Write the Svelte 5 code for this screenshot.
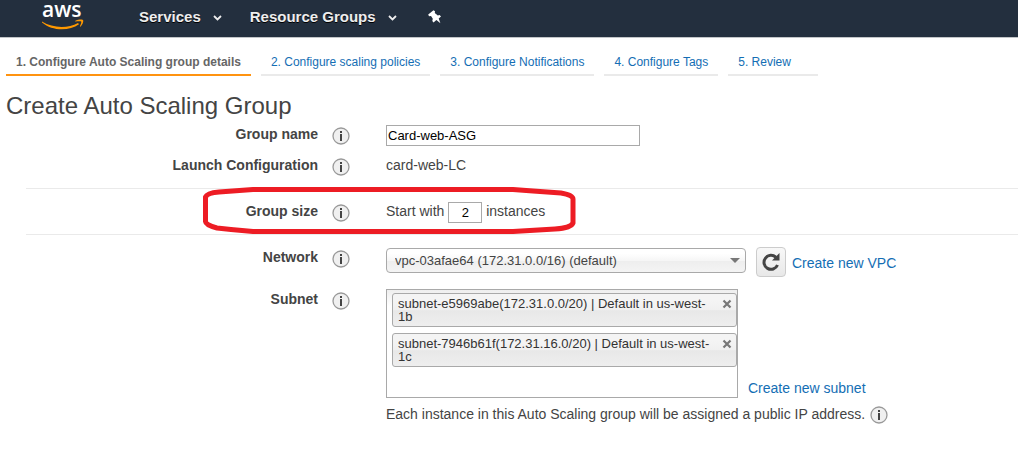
<script>
let groupName = "Card-web-ASG";
let groupSize = "2";
let network = "vpc-03afae64 (172.31.0.0/16) (default)";

let steps = [
	"1. Configure Auto Scaling group details",
	"2. Configure scaling policies",
	"3. Configure Notifications",
	"4. Configure Tags",
	"5. Review"
];

let subnets = [
	"subnet-e5969abe(172.31.0.0/20) | Default in us-west-1b",
	"subnet-7946b61f(172.31.16.0/20) | Default in us-west-1c"
];

const removeSubnet = (subnet) => {
	subnets = subnets.filter((s) => s !== subnet);
};
</script>

{#snippet info(topic)}
	<button class="info" type="button" aria-label="About {topic}">
		<svg width="18" height="18" viewBox="0 0 18 18">
			<circle cx="9" cy="9" r="8" fill="#f0f0f0" stroke="#999" stroke-width="1.3" />
			<path d="M8 4h2v2h-2zM8 7h2v7h-2z" fill="#444" />
		</svg>
	</button>
{/snippet}

{#snippet chevron()}
	<svg width="9" height="6" viewBox="0 0 9 6">
		<path d="M1 1l3.5 3.4L8 1" fill="none" stroke="#eee" stroke-width="1.8" />
	</svg>
{/snippet}

<header class="topnav">
	<a class="logo" href="#home">
		<span>aws</span>
		<svg width="42" height="12" viewBox="0 0 42 12">
			<path d="M0 2.500C11 9.500 26 9.500 36 4l1 1.200C27 12.300 10 12 0 3.400z" fill="#f90" />
			<path d="M33 2c3-1.500 7.300-1.800 8-.9.8 1-.4 4.600-2.400 6.600l-.7-.4c1-2 1.700-4 1.300-4.700-.6-.6-3.200-.4-5.800 0z" fill="#f90" />
		</svg>
	</a>
	<button class="menu" type="button">Services {@render chevron()}</button>
	<button class="menu" type="button">Resource Groups {@render chevron()}</button>
	<button class="pin" type="button" aria-label="Pin shortcuts">
		<svg width="14" height="14" viewBox="0 0 14 14">
			<path d="M5.500.3l1.500 1L6.800 3l3 2.400 1.800-.4 1.400 1.400-2.300 2.200 1.700 4.700-4-3.300L5.500 12.500 4.300 11l.5-2.200L3 6 1 6.300.2 4.600z" fill="#fff" />
		</svg>
	</button>
</header>

<nav class="steps">
	{#each steps as step, i}
		<a href="#step{i + 1}" class:active={i === 0}>{step}</a>
	{/each}
</nav>

<main>
	<h1>Create Auto Scaling Group</h1>

	<form>
		<div class="row">
			<label for="group-name">Group name</label>
			{@render info("group name")}
			<div class="field"><input id="group-name" class="name" type="text" bind:value={groupName} /></div>
		</div>
		<div class="row">
			<span class="label">Launch Configuration</span>
			{@render info("launch configuration")}
			<div class="field">card-web-LC</div>
		</div>

		<div class="row size">
			<label for="group-size">Group size</label>
			{@render info("group size")}
			<div class="field">
				Start with <input id="group-size" class="count" type="text" bind:value={groupSize} /> instances
			</div>
			<svg class="marker" width="374" height="50" viewBox="0 0 374 50">
				<path d="M50 4.500H310L330 6L358 8Q370 10 370 14V38Q368 43 352 44L310 46.500H50L28 44.500L14 43Q2 40 2.500 36V12Q4 8 16 7L50 4.500z" fill="none" stroke="#ed1c24" stroke-width="5" stroke-linejoin="round" />
			</svg>
		</div>

		<div class="row network">
			<label for="network">Network</label>
			{@render info("network")}
			<div class="field inline">
				<div class="select">
					<select id="network" bind:value={network}>
						<option>vpc-03afae64 (172.31.0.0/16) (default)</option>
					</select>
				</div>
				<button class="refresh" type="button" aria-label="Refresh networks">
					<svg width="18" height="18" viewBox="0 0 18 18">
						<path d="M14 4.400A7 7 0 1 0 15.500 12" fill="none" stroke="#444" stroke-width="3" />
						<path d="M17.500 0v7.500H10z" fill="#444" />
					</svg>
				</button>
				<a href="#new-vpc">Create new VPC</a>
			</div>
		</div>

		<div class="row subnet">
			<span class="label">Subnet</span>
			{@render info("subnet")}
			<div class="field">
				<div class="subnets">
					<ul>
						{#each subnets as subnet}
							<li>
								<span>{subnet}</span>
								<button type="button" aria-label="Remove {subnet}" on:click={() => removeSubnet(subnet)}>
									<svg width="10" height="10" viewBox="0 0 10 10">
										<path d="M1.500 1.500l7 7M8.500 1.500l-7 7" stroke="#777" stroke-width="2.200" />
									</svg>
								</button>
							</li>
						{/each}
					</ul>
					<a href="#new-subnet">Create new subnet</a>
				</div>
				<div class="note">Each instance in this Auto Scaling group will be assigned a public IP address. {@render info("public IP")}</div>
			</div>
		</div>
	</form>
</main>

<style>
	:global(body) {
		margin: 0;
		background: #fff;
		color: #444;
		font: 14px/18px "Liberation Sans", Arial, sans-serif;
	}

	a {
		color: #146eb4;
		text-decoration: none;
	}

	button {
		padding: 0;
		border: none;
		background: none;
		font: inherit;
		cursor: pointer;
	}

	svg {
		display: block;
	}

	.topnav {
		display: flex;
		align-items: flex-start;
		height: 37px;
		padding-left: 42px;
		background: #232f3e;
		border-bottom: 1px solid #c2c5c8;
	}

	.logo {
		width: 42px;
		margin-right: 55px;
		color: #fff;
		font: 600 21px/19px "Open Sans", sans-serif;
	}

	.logo span {
		display: block;
	}

	.menu {
		display: flex;
		align-items: center;
		gap: 12px;
		height: 34px;
		margin-right: 28px;
		color: #eee;
		font-size: 15px;
		font-weight: bold;
		text-shadow: 0 1px 0 #000;
	}

	.menu svg {
		margin-top: 2px;
	}

	.pin {
		margin: 10px 0 0 3px;
	}

	.steps {
		display: flex;
		gap: 10px;
		padding: 10px 6px 0;
	}

	.steps a {
		min-width: 70px;
		padding: 5px 10px 3px;
		border-bottom: 2px solid #eaeaea;
		font-size: 12px;
	}

	.steps .active {
		border-color: #ff9310;
		color: #666;
		font-weight: bold;
	}

	h1 {
		margin: 0;
		padding: 15px 6px 0;
		font-size: 24px;
		font-weight: normal;
		line-height: 30px;
	}

	.row {
		display: grid;
		grid-template-columns: 292px 18px 1fr;
		column-gap: 14px;
		position: relative;
		min-height: 31px;
		margin-left: 26px;
	}

	label,
	.label {
		padding-top: 4px;
		font-weight: bold;
		text-align: right;
	}

	.info {
		height: 18px;
		margin-top: 6px;
	}

	.field {
		padding: 4px 0 0 22px;
	}

	input {
		box-sizing: border-box;
		height: 21px;
		border: 1px solid #a9a9a9;
		color: #000;
		font: inherit;
		font-size: 13px;
		vertical-align: middle;
	}

	.name {
		display: block;
		width: 254px;
		padding: 0 1px;
	}

	.count {
		width: 34px;
		padding: 0;
		text-align: center;
	}

	.size {
		box-sizing: border-box;
		height: 47px;
		margin-top: 5px;
		padding-top: 9px;
		border: 1px solid #eaeaea;
		border-width: 1px 0;
	}

	/* hand-drawn highlight round the group size */
	.marker {
		position: absolute;
		top: -4px;
		left: 177px;
		pointer-events: none;
	}

	.network,
	.subnet {
		padding-top: 9px;
	}

	.inline {
		display: flex;
		align-items: flex-start;
		padding-top: 3px;
	}

	.select {
		position: relative;
		width: 360px;
		margin: 1px 10px 0 0;
	}

	.select::after {
		content: "";
		position: absolute;
		top: 10px;
		right: 6px;
		border: 5px solid transparent;
		border-top: 5px solid #777;
		border-bottom: none;
		pointer-events: none;
	}

	select {
		display: block;
		width: 100%;
		height: 25px;
		padding: 0 8px;
		appearance: none;
		border: 1px solid #a9a9a9;
		border-radius: 4px;
		background: linear-gradient(#fff 20%, #f6f6f6 50%, #eee 52%, #f4f4f4);
		color: #444;
		font: inherit;
		font-size: 13px;
	}

	.refresh {
		display: grid;
		place-items: center;
		box-sizing: border-box;
		width: 30px;
		height: 30px;
		margin-right: 6px;
		border: 1px solid #ccc;
		border-radius: 4px;
		background: linear-gradient(#f8f8f8, #e8e8e8);
	}

	.inline a {
		margin-top: 7px;
	}

	.subnet .field {
		padding-top: 3px;
	}

	.subnets {
		display: flex;
		align-items: flex-end;
		gap: 10px;
	}

	.subnets a {
		margin-bottom: 1px;
	}

	ul {
		display: flex;
		flex-direction: column;
		gap: 6px;
		box-sizing: border-box;
		width: 352px;
		min-height: 109px;
		margin: 0;
		padding: 3px 0 3px 5px;
		border: 1px solid #a9a9a9;
		background: linear-gradient(#eee, #fff 16px);
		list-style: none;
	}

	li {
		display: flex;
		align-items: flex-start;
		justify-content: space-between;
		gap: 12px;
		padding: 3px 4px 3px 5px;
		border: 1px solid #a9a9a9;
		border-radius: 3px;
		background: linear-gradient(#f4f4f4 20%, #f0f0f0 50%, #e8e8e8 52%, #eee);
		color: #333;
		font-size: 13px;
		line-height: 13px;
	}

	li button {
		margin-top: 2px;
	}

	.note {
		display: flex;
		gap: 5px;
		margin-top: 7px;
	}

	.note :global(.info) {
		margin-top: 1px;
	}
</style>
